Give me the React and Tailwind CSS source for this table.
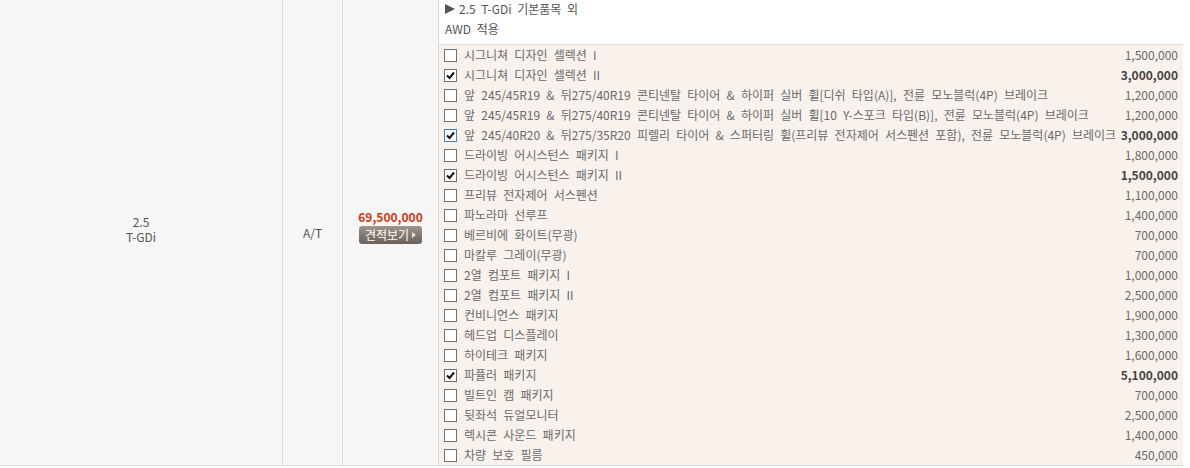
const options = [
  { name: '시그니쳐 디자인 셀렉션 I', price: '1,500,000' },
  { name: '시그니쳐 디자인 셀렉션 II', price: '3,000,000', checked: true },
  { name: '앞 245/45R19 & 뒤275/40R19 콘티넨탈 타이어 & 하이퍼 실버 휠[디쉬 타입(A)], 전륜 모노블럭(4P) 브레이크', price: '1,200,000' },
  { name: '앞 245/45R19 & 뒤275/40R19 콘티넨탈 타이어 & 하이퍼 실버 휠[10 Y-스포크 타입(B)], 전륜 모노블럭(4P) 브레이크', price: '1,200,000' },
  { name: '앞 245/40R20 & 뒤275/35R20 피렐리 타이어 & 스퍼터링 휠(프리뷰 전자제어 서스펜션 포함), 전륜 모노블럭(4P) 브레이크', price: '3,000,000', checked: true, focus: true },
  { name: '드라이빙 어시스턴스 패키지 I', price: '1,800,000' },
  { name: '드라이빙 어시스턴스 패키지 II', price: '1,500,000', checked: true },
  { name: '프리뷰 전자제어 서스펜션', price: '1,100,000' },
  { name: '파노라마 선루프', price: '1,400,000' },
  { name: '베르비에 화이트(무광)', price: '700,000' },
  { name: '마칼루 그레이(무광)', price: '700,000' },
  { name: '2열 컴포트 패키지 I', price: '1,000,000' },
  { name: '2열 컴포트 패키지 II', price: '2,500,000' },
  { name: '컨비니언스 패키지', price: '1,900,000' },
  { name: '헤드업 디스플레이', price: '1,300,000' },
  { name: '하이테크 패키지', price: '1,600,000' },
  { name: '파퓰러 패키지', price: '5,100,000', checked: true },
  { name: '빌트인 캠 패키지', price: '700,000' },
  { name: '뒷좌석 듀얼모니터', price: '2,500,000' },
  { name: '렉시콘 사운드 패키지', price: '1,400,000' },
  { name: '차량 보호 필름', price: '450,000' },
]

function Check({ checked, focus }) {
  return (
    <span
      className={`w-[13px] h-[13px] shrink-0 border bg-white flex items-center justify-center ${
        focus ? 'border-[#4a7fc1]' : 'border-[#707070]'
      }`}
    >
      {checked && (
        <svg width="9" height="9" viewBox="0 0 9 9">
          <path d="M1 4.5 L3.5 7 L8 1.5" fill="none" stroke="#111" strokeWidth="2" />
        </svg>
      )}
    </span>
  )
}

export default function App() {
  return (
    <div className="w-[1190px] h-[468px] bg-white font-['Noto_Sans_CJK_KR',sans-serif] text-[12px] text-[#6a6a6a]">
      <div className="flex w-[1183px] border-b border-[#dcdcdc]">
        {/* trim */}
        <div className="w-[283px] bg-[#f6f6f6] border-r border-[#dcdcdc] flex flex-col items-center justify-center pb-[7px] leading-[15px] text-[#555]">
          <span>2.5</span>
          <span>T-GDi</span>
        </div>

        {/* transmission */}
        <div className="w-[60px] bg-[#f6f6f6] border-r border-[#dcdcdc] flex items-center justify-center text-[#555]">
          A/T
        </div>

        {/* price */}
        <div className="w-[96px] bg-[#f6f6f6] border-r border-[#dcdcdc] flex flex-col items-center justify-center pb-[13px]">
          <span className="font-bold text-[#d6360f] leading-[15px]">69,500,000</span>
          <button className="mt-[2px] w-[63px] h-[18px] rounded-[3px] bg-gradient-to-b from-[#a0958d] to-[#6b615a] text-white text-[12px] flex items-center justify-center gap-[3px] leading-none">
            견적보기
            <svg width="4" height="6" viewBox="0 0 4 6">
              <path d="M0 0 L4 3 L0 6 Z" fill="#e8e2dc" />
            </svg>
          </button>
        </div>

        {/* options */}
        <div className="flex-1 flex flex-col">
          <div className="h-[45px] bg-white border-b border-[#dcdcdc] pl-[6px] text-[#555] [word-spacing:3px]">
            <div className="leading-[17px] flex items-center gap-[4px]">
              <svg width="10" height="10" viewBox="0 0 10 10">
                <path d="M0 0 L10 5 L0 10 Z" fill="#555" />
              </svg>
              2.5 T-GDi 기본품목 외
            </div>
            <div className="leading-[17px] mt-[3px]">AWD 적용</div>
          </div>
          <div className="bg-[#f8f1ec]">
            {options.map((o) => (
              <div key={o.name} className="h-[20px] flex items-center pl-[5px] pr-[5px]">
                <Check checked={o.checked} focus={o.focus} />
                <span className="ml-[7px] flex-1 whitespace-nowrap overflow-hidden [word-spacing:3.5px]">{o.name}</span>
                <span className={o.checked ? 'font-bold text-[#444]' : 'text-[#6a6a6a]'}>{o.price}</span>
              </div>
            ))}
          </div>
        </div>
      </div>
    </div>
  )
}
